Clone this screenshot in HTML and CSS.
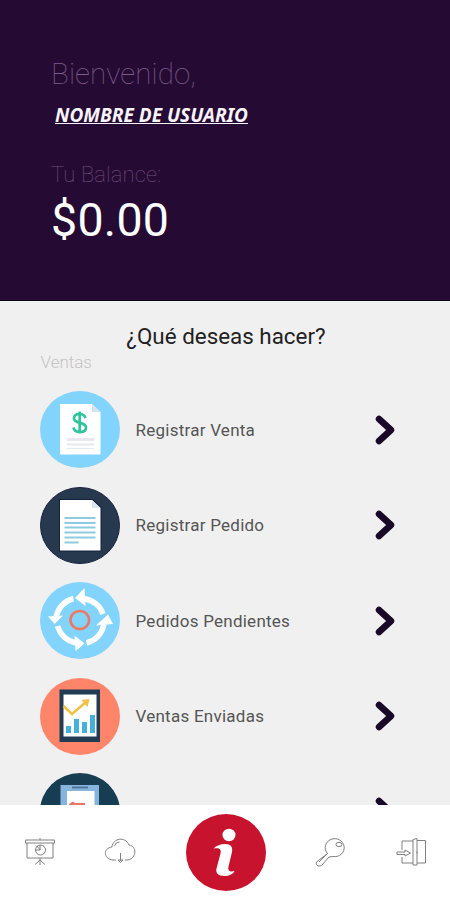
FILE: index.html
```
<!DOCTYPE html>
<html lang="es">
<head>
<meta charset="utf-8">
<title>Inicio</title>
<link rel="stylesheet" href="styles.css">
</head>
<body>
<div class="app">
  <header class="hero">
    <div class="welcome"><span>Bienvenido,</span></div>
    <div class="user"><span>NOMBRE DE USUARIO</span></div>
    <div class="balance-label"><span>Tu Balance:</span></div>
    <div class="balance"><span>$0.00</span></div>
  </header>
  <main class="content">
    <h1 class="question"><span>¿Qué deseas hacer?</span></h1>
    <div class="section"><span>Ventas</span></div>
    <ul class="menu">
      <li class="item">
        <svg class="badge" viewBox="0 0 80 77">
          <ellipse cx="40" cy="38.5" rx="40" ry="38.5" fill="#82d4fc"/>
          <path d="M20 13h32l8.500 8v42.500H20z" fill="#fff"/>
          <path d="M52 13v8h8.500z" fill="#d3e3f0"/>
          <path d="M45.500 27c-1-3-3-4-6-4-3.500 0-5.500 1.500-5.500 4.300 0 6.200 12 3 12 9.200 0 3-2.500 4.500-6 4.500s-6-1.500-6.500-4.500M39.700 20.500v22" fill="none" stroke="#2fc49b" stroke-width="2.700"/>
          <path d="M27 47h27v3H27zM27 52.500h27v2H27zM27 57h27v1H27z" fill="#e7e9ee"/>
        </svg>
        <span class="label">Registrar Venta</span>
        <svg class="chevron" viewBox="0 0 20 30"><path d="M4 4l12 11L4 26"/></svg>
      </li>
      <li class="item">
        <svg class="badge" viewBox="0 0 80 77">
          <ellipse cx="40" cy="38.500" rx="39.500" ry="38" fill="#26394f" stroke="#17213f"/>
          <path d="M19 12H53l8.500 8v44.500H19z" fill="#17213f"/>
          <path d="M20 13h32l8.500 8v42.500H20z" fill="#fff"/>
          <path d="M52 13v8h8.500z" fill="#dbe7ef"/>
          <path d="M24.500 31h31M24.500 36h31M24.500 40.500h31M24.500 45.500h31M24.500 50.500h31M24.500 55.500h14" stroke="#8ecbe0" stroke-width="2"/>
        </svg>
        <span class="label">Registrar Pedido</span>
        <svg class="chevron" viewBox="0 0 20 30"><path d="M4 4l12 11L4 26"/></svg>
      </li>
      <li class="item">
        <svg class="badge" viewBox="0 0 80 77">
          <ellipse cx="40" cy="38.500" rx="40" ry="38.500" fill="#82d4fc"/>
          <g fill="none" stroke="#fff" stroke-width="5.500">
            <path d="M33.500 16.500Q20 20 16 35"/><path d="M63 32Q58.500 19 43 16.500"/><path d="M46.500 61Q61 57 64 42"/><path d="M17.500 44Q22 58 36 61"/>
          </g>
          <path d="M8 34.500l15-1-8.500 8.500zM35 16l9.500-10 1 18zM56 43.500l12-11 5 9.500zM44.500 61.500l-10-8 1 15.500z" fill="#fff"/>
          <ellipse cx="39.800" cy="38" rx="9.300" ry="9" fill="none" stroke="#ef7660" stroke-width="2.600"/>
        </svg>
        <span class="label">Pedidos Pendientes</span>
        <svg class="chevron" viewBox="0 0 20 30"><path d="M4 4l12 11L4 26"/></svg>
      </li>
      <li class="item">
        <svg class="badge" viewBox="0 0 80 77">
          <ellipse cx="40" cy="38.500" rx="40" ry="38.500" fill="#fe846a"/>
          <path d="M19.500 11.500H60V64H19.500z" fill="#223b54"/>
          <path d="M23.500 16.500h33v42h-33z" fill="#fff"/>
          <path d="M26 48h5v7H26zM34 41h5v14h-5zM42 44h5v11h-5zM50 37h5v18h-5z" fill="#45b0dc"/>
          <path d="M23.500 28l8.500 8 14-12" fill="none" stroke="#f2c044" stroke-width="2.600"/>
          <path d="M41.500 22l8-1-2 8z" fill="#f2c044"/>
        </svg>
        <span class="label">Ventas Enviadas</span>
        <svg class="chevron" viewBox="0 0 20 30"><path d="M4 4l12 11L4 26"/></svg>
      </li>
      <li class="item">
        <svg class="badge" viewBox="0 0 80 77">
          <ellipse cx="40" cy="38.500" rx="40" ry="38.500" fill="#173d52"/>
          <path d="M20.500 12h38.500v54H20.500z" fill="#87b4da"/>
          <path d="M27 18h27.500v42H27z" fill="#fff"/>
          <path d="M32 13.500h16v2H32z" fill="#4f769c"/>
          <path d="M29 31l4-2.500 2 1.500h10v2H29z" fill="#ea7564"/>
        </svg>
        <span class="label"></span>
        <svg class="chevron" viewBox="0 0 20 30"><path d="M4 4l12 11L4 26"/></svg>
      </li>
    </ul>
  </main>
  <nav class="tabs">
    <svg class="tab" viewBox="0 0 40 40">
      <path d="M5.500 7h29v3h-29zM7 10v15h26V10M20 5v2M20 25v7M20 27l-5 4.500M20 27l5 4.500"/>
      <circle cx="20.500" cy="17" r="5"/><path d="M20 12v5h-5M16 12.500l4.500 4.500"/>
    </svg>
    <svg class="tab" viewBox="0 0 40 40">
      <path d="M16 27h-3c-10-1-10-12-1-13 1-9 13-11 17-2 8 1 8 13-1 15h-3M20.500 20v8M18 27h5l-2.500 2.500zM14.500 13q1-4 5-4"/>
    </svg>
    <svg class="info" viewBox="0 0 80 77">
      <ellipse cx="40" cy="38.500" rx="40" ry="38.500" fill="#c8132f"/>
      <ellipse cx="43" cy="21" rx="6.500" ry="6.200" fill="#fff"/>
      <path d="M27.500 34.500c3-3 7-4.500 11.500-4.500 6 0 8 3 7 8l-3.500 14.500c-1 4 1 6 6 4.500-1.500 3.500-5.500 5-10 5-6.500 0-9-3-8-7.500l4-15c1-4.500-1-6-7-5z" fill="#fff"/>
    </svg>
    <svg class="tab" viewBox="0 0 40 40">
      <path d="M16.500 20.500A9.500 9 0 1 1 22 23.500L18 24l-7 8c-2 2-7 1-5.500-3z"/>
      <ellipse cx="28" cy="11.500" rx="3" ry="2.200"/><path d="M8 29l9-9"/>
    </svg>
    <svg class="tab" viewBox="0 0 40 40">
      <path d="M11 17V8h11M11 24v6h11M22 6.500l4-1v26.500h-4zM26 7.500h8.500v22.500H26M6 19h8v-2l5.500 3-5.500 3v-1.500H6zM26 18.500v2"/>
    </svg>
  </nav>
</div>
</body>
</html>
```
FILE: styles.css
```
* { box-sizing: border-box; }
body { margin: 0; font-family: Roboto, sans-serif; background: #fff; }
.app { height: 900px; display: flex; flex-direction: column; overflow: hidden; }
.hero { height: 301px; flex: none; background: #250b34; border-bottom: 1px solid #0d0018; padding: 54px 51px 0; white-space: nowrap; }
.welcome { height: 40px; line-height: 41px; font-size: 29.5px; font-weight: 100; color: #7d5b8a; letter-spacing: 0.1px; }
.user { height: 42px; line-height: 42px; padding-left: 4px; font-family: "Noto Sans", sans-serif; font-size: 19px; font-weight: 700; font-style: italic; color: #f7f3f8; text-decoration: underline; }
.balance-label { height: 38px; margin-top: 19px; line-height: 39px; font-size: 22px; font-weight: 100; color: #75517f; letter-spacing: 0.15px; }
.balance { height: 54px; line-height: 54px; font-size: 46.5px; color: #fff; letter-spacing: 0.3px; }
.content { flex: 1; min-height: 0; overflow: hidden; background: #f0f0f0; padding-top: 20px; }
.question { margin: 0; height: 30px; line-height: 30px; padding-left: 2px; font-size: 22.4px; font-weight: 400; color: #222; text-align: center; }
.section { height: 20px; margin-top: 1px; padding-left: 40.5px; line-height: 20px; font-size: 17px; font-weight: 300; color: #c3c3c3; }
.menu { list-style: none; margin: 10px 0 0; padding: 0; }
.item { height: 95.5px; padding: 0 53px 0 40px; display: flex; align-items: center; }
.badge { width: 80px; height: 77px; flex: none; }
.label { flex: 1; margin-left: 15.5px; font-size: 17px; color: #555; letter-spacing: 0.25px; }
.chevron { width: 20px; height: 30px; margin-right: 2px; fill: none; stroke: #1a0828; stroke-width: 6.5; stroke-linecap: round; stroke-linejoin: round; }
.tabs { height: 95px; flex: none; display: flex; align-items: center; justify-content: space-between; padding: 0 19px 0 20px; background: #fff; }
.tab { width: 40px; height: 40px; fill: none; stroke: #808080; stroke-width: 1; stroke-linejoin: round; }
.info { width: 80px; height: 77px; margin: 0 5px; }
```
